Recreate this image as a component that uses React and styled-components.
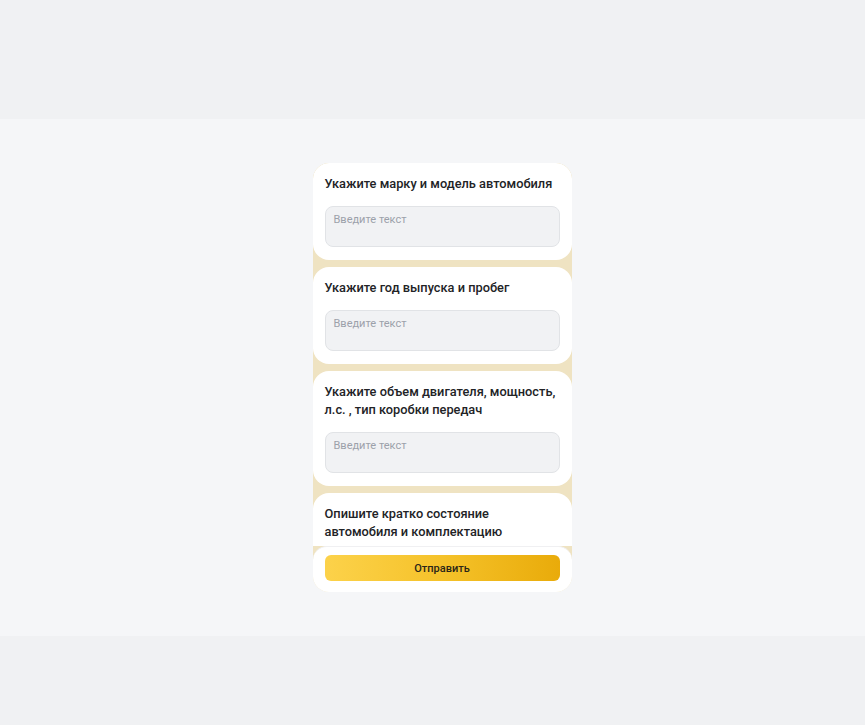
import React from "react";
import styled, { createGlobalStyle } from "styled-components";

const GlobalStyle = createGlobalStyle`
  html, body {
    margin: 0;
    padding: 0;
    background: #f0f1f3;
    font-family: Roboto, "Noto Sans", sans-serif;
  }
  * {
    box-sizing: border-box;
  }
`;

const Page = styled.div`
  min-height: 725px;
  padding-top: 119px;
  background: #f0f1f3;
`;

const Band = styled.div`
  height: 517px;
  background: #f5f6f8;
  display: flex;
  align-items: center;
  justify-content: center;
`;

const Panel = styled.form`
  width: 259px;
  height: 429px;
  margin-left: 19px;
  display: flex;
  flex-direction: column;
  border-radius: 16px;
  overflow: hidden;
  background: #efe3c2;
`;

const List = styled.div`
  flex: 1;
  min-height: 0;
  overflow: hidden;
  display: flex;
  flex-direction: column;
  gap: 7px;
`;

const Card = styled.div`
  flex-shrink: 0;
  background: #ffffff;
  border-radius: 16px;
  padding: 12px 12px 13px;
  display: flex;
  flex-direction: column;
  gap: 13px;
`;

const Title = styled.div`
  font-size: 12.8px;
  font-weight: 500;
  line-height: 18px;
  color: #222326;
`;

const Field = styled.textarea`
  display: block;
  width: 100%;
  height: 41px;
  resize: none;
  background: #f1f2f4;
  border: 1px solid #e1e3e6;
  border-radius: 8px;
  padding: 6px 8px;
  font-family: inherit;
  font-size: 11px;
  color: #333;
  outline: none;

  &::placeholder {
    color: #9ca1aa;
  }
`;

const Footer = styled.div`
  flex-shrink: 0;
  background: #ffffff;
  border-top: 1px solid #f0f0f2;
  border-radius: 14px 14px 0 0;
  padding: 8px 12px 11px;
`;

const Submit = styled.button`
  display: block;
  width: 100%;
  height: 26px;
  border: none;
  border-radius: 6px;
  background: linear-gradient(90deg, #fcd24a 0%, #f5c22a 50%, #e9ab0a 100%);
  font-family: inherit;
  font-size: 11px;
  font-weight: 500;
  color: #2a2618;
  cursor: pointer;
`;

const questions = [
  "Укажите марку и модель автомобиля",
  "Укажите год выпуска и пробег",
  "Укажите объем двигателя, мощность, л.с. , тип коробки передач",
  "Опишите кратко состояние автомобиля и комплектацию",
];

export default function App() {
  return (
    <>
      <GlobalStyle />
      <Page>
        <Band>
          <Panel onSubmit={(e) => e.preventDefault()}>
            <List>
              {questions.map((q) => (
                <Card key={q}>
                  <Title>{q}</Title>
                  <Field placeholder="Введите текст" />
                </Card>
              ))}
            </List>
            <Footer>
              <Submit type="submit">Отправить</Submit>
            </Footer>
          </Panel>
        </Band>
      </Page>
    </>
  );
}
